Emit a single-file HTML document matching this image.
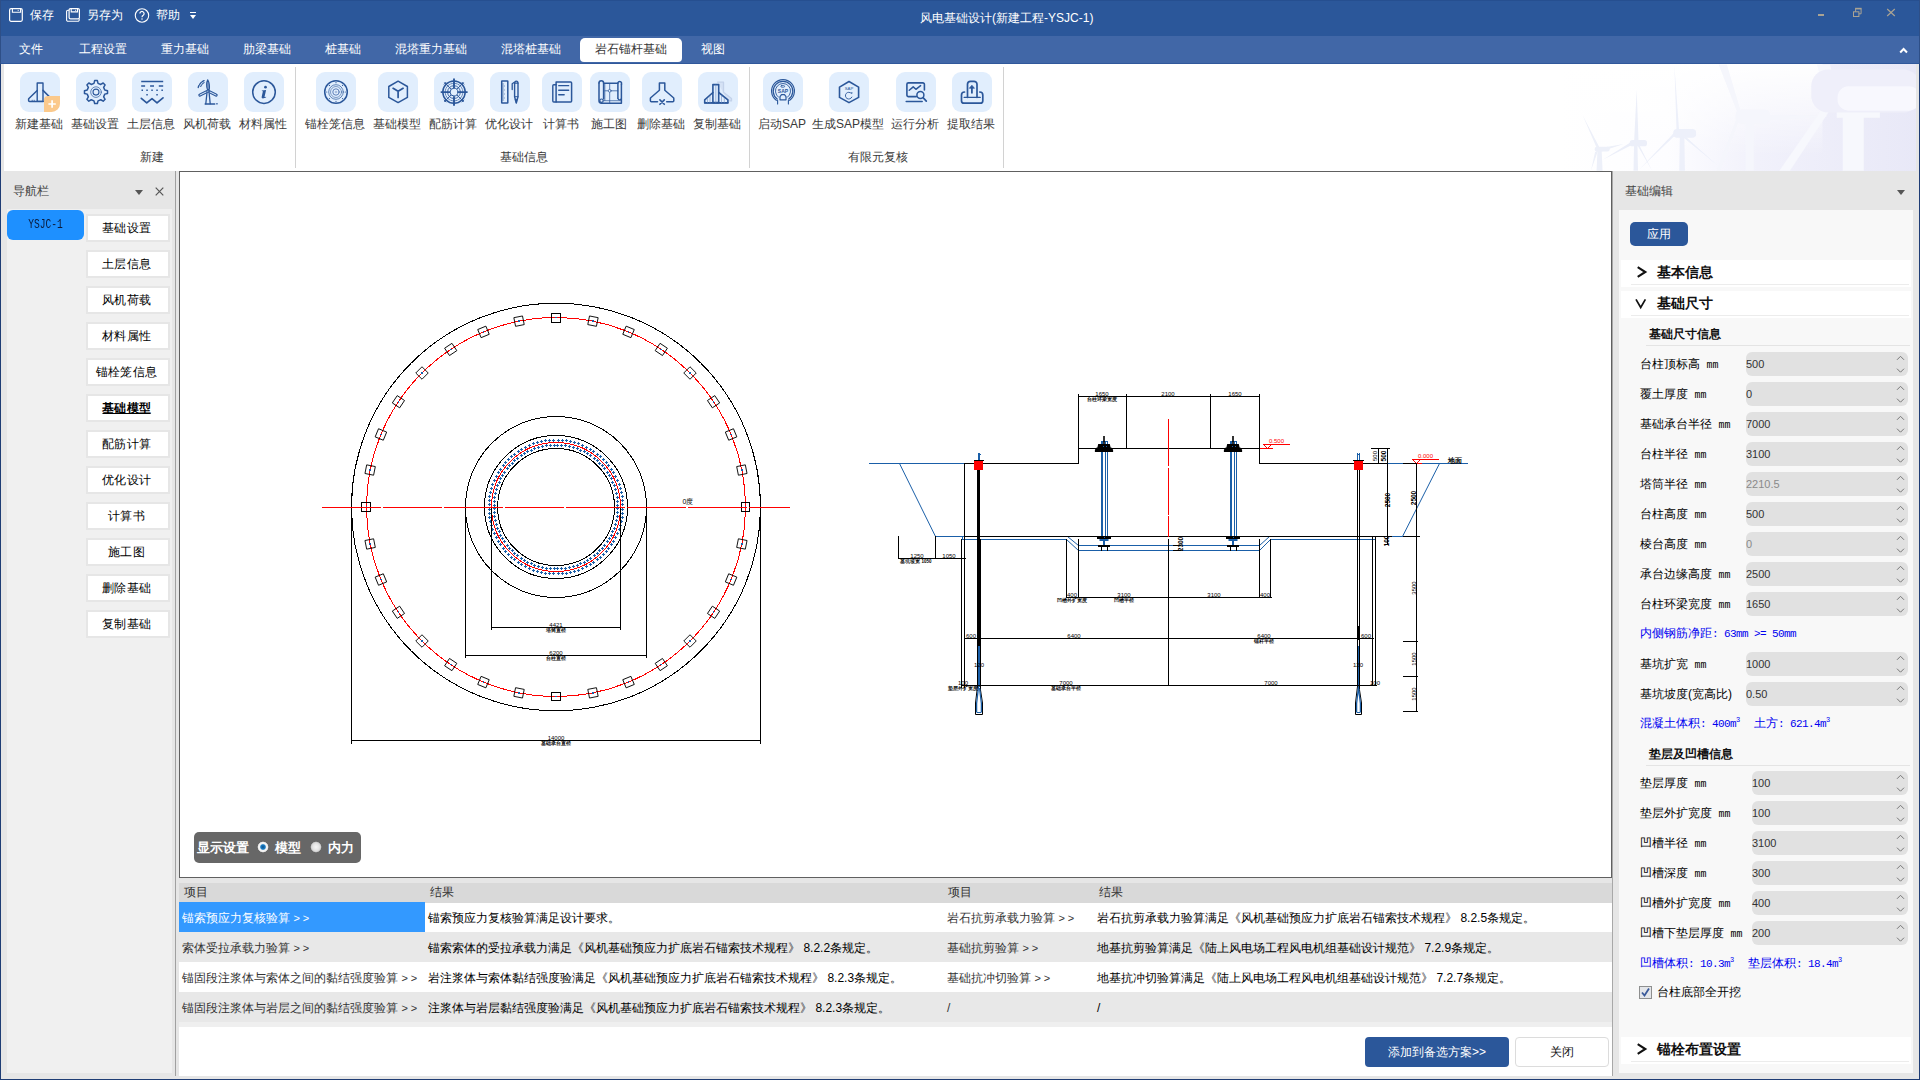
<!DOCTYPE html><html lang="zh"><head><meta charset="utf-8"><title>风电基础设计</title><style>
*{box-sizing:border-box;margin:0;padding:0}
html,body{width:1920px;height:1080px;overflow:hidden;background:#e6e6e6}
body{font-family:"Liberation Sans",sans-serif;font-size:12px;color:#222;position:relative}
.abs{position:absolute}
.t{position:absolute;white-space:nowrap;line-height:1}
#title{left:0;top:0;width:1920px;height:36px;background:#2b579a}
#menu{left:0;top:36px;width:1920px;height:28px;background:#4167a7;border-bottom:1px solid #30589b}
#ribbon{left:4px;top:64px;width:1912px;height:107px;background:#fff;overflow:hidden}
.frameL{left:0;top:0;width:1px;height:1080px;background:linear-gradient(#2e4f87 0,#2e4f87 64px,#1f3d75 64px)}
.frameR{left:1919px;top:0;width:1px;height:1080px;background:linear-gradient(#2e4f87 0,#2e4f87 64px,#1f3d75 64px)}
.frameT{left:0;top:0;width:1920px;height:1px;background:#264f90}
.frameB{left:0;top:1079px;width:1920px;height:1px;background:#1f3d75}
.tile{position:absolute;top:8px;width:40px;height:40px;border-radius:9px;background:#e1eefd}
.tile svg{position:absolute;left:0;top:0;width:40px;height:40px;overflow:visible}
.rl{position:absolute;top:53px;margin-left:-1px;font-size:12px;line-height:14px;color:#3a3a3a;white-space:nowrap;transform:translateX(-50%)}
.gl{position:absolute;top:86px;font-size:12px;line-height:14px;color:#3a3a3a;white-space:nowrap;transform:translateX(-50%)}
.rsep{position:absolute;top:3px;width:1px;height:101px;background:#d2d2d2}
.mi{position:absolute;top:0;height:28px;line-height:27px;font-size:12px;color:#fff;white-space:nowrap;transform:translateX(-50%)}
.navbtn{position:absolute;left:86px;width:84px;height:28px;background:#e6e6e6}
.navbtn i{position:absolute;left:2px;top:2px;right:2px;bottom:2px;background:#fff;display:block}
.navbtn span{position:absolute;left:0;right:3px;top:7px;text-align:center;font-size:12px;line-height:14px;color:#000;font-style:normal}
.row{position:absolute;left:1640px;font-size:12px;line-height:14px;color:#000;white-space:nowrap}
.inp{position:absolute;height:24px;background:#e1e1e1;border-radius:6px;font-size:11px;line-height:24px;color:#333;padding-left:0}
.inp b{font-weight:normal;position:absolute;left:0;top:0}
.inp svg{position:absolute;right:3px;top:2px;width:9px;height:20px}
.blue{position:absolute;left:1640px;font-size:12px;line-height:14px;color:#0000f0;white-space:nowrap}
.sec{position:absolute;left:1621px;width:290px;height:27px;background:#fff}
.sec u{position:absolute;left:10px;right:2px;bottom:2px;height:1px;background:#ececec;display:block}
.sec span{position:absolute;left:36px;top:5px;font-size:14px;line-height:15px;font-weight:bold;color:#111}
.sec em{position:absolute;left:14px;top:5px;font-size:15px;line-height:15px;font-weight:bold;font-style:normal;color:#111}
.sub{position:absolute;left:1649px;font-size:12px;line-height:14px;font-weight:bold;color:#111;white-space:nowrap}
.subl{position:absolute;left:1646px;width:264px;height:1px;background:#e4e4e4}
.th{position:absolute;top:882px;height:20px;font-size:12px;line-height:20px;color:#333}
.td{position:absolute;font-size:12px;line-height:14px;white-space:nowrap;color:#333}
.tdb{color:#000}

.mo{font-family:"Liberation Mono",monospace;font-size:11px;letter-spacing:-.6px;white-space:pre}
.mo sup{font-size:7px;line-height:0;vertical-align:5px;letter-spacing:0;display:inline-block;width:6px}
.sec em.gt{left:15px;top:3px;font-size:18px;line-height:18px;transform:scaleX(.9)}
</style></head><body><div class="abs" id="title"><svg class="abs" style="left:8px;top:7px" width="16" height="16" viewBox="0 0 16 16" fill="none" stroke="#fff" stroke-width="1.2"><rect x="1.6" y="1.700" width="12.700" height="12.600" rx="1.500"/><path d="M4.400 1.700v3.500h8.200v-3.500" stroke-width="1.100"/><path d="M10.200 2.900v1" stroke-width="1"/></svg><div class="t" style="left:30px;top:9px;font-size:12px;color:#fff;width:24.06px;text-align:justify;text-align-last:justify;white-space:nowrap">保存</div><svg class="abs" style="left:65px;top:7px" width="16" height="16" viewBox="0 0 16 16" fill="none" stroke="#fff" stroke-width="1.200"><rect x="4.100" y="1.700" width="10.300" height="10.100" rx="1.400"/><path d="M6.200 1.700v3.200h6.300v-3.200" stroke-width="1.100"/><path d="M10.600 2.800v1" stroke-width="1"/><path d="M4.100 3.300h-1.200a1.300 1.300 0 0 0-1.300 1.300v8.300a1.400 1.400 0 0 0 1.400 1.400h9.800a1.400 1.400 0 0 0 1.400-1.400v-1.100" stroke-width="1.100"/></svg><div class="t" style="left:87px;top:9px;font-size:12px;color:#fff;width:36.06px;text-align:justify;text-align-last:justify;white-space:nowrap">另存为</div><svg class="abs" style="left:134px;top:7px" width="16" height="16" viewBox="0 0 16 16" fill="none" stroke="#fff" stroke-width="1.100"><circle cx="8" cy="8.500" r="6.700"/><path d="M5.900 6.600a2.100 2.100 0 1 1 3.300 1.700c-.8.500-1.200.9-1.200 1.900" stroke-width="1.200"/><path d="M8 12h.01" stroke-width="1.500" stroke-linecap="round"/></svg><div class="t" style="left:156px;top:9px;font-size:12px;color:#fff;width:24.06px;text-align:justify;text-align-last:justify;white-space:nowrap">帮助</div><div class="abs" style="left:190px;top:12px;width:6px;height:1px;background:#fff"></div><div class="abs" style="left:190px;top:15px;width:0;height:0;border-left:3px solid transparent;border-right:3px solid transparent;border-top:4px solid #fff"></div><div class="t" style="left:920px;top:12px;font-size:12px;color:#fff;width:173.4px;text-align:justify;text-align-last:justify;white-space:nowrap">风电基础设计(新建工程-YSJC-1)</div><div class="abs" style="left:1818px;top:14px;width:6px;height:2px;background:#aaa393"></div><svg class="abs" style="left:1852px;top:7px" width="11" height="11" viewBox="0 0 11 11" fill="none" stroke="#aaa393" stroke-width="1"><rect x="1.500" y="4.800" width="5.400" height="4.700"/><path d="M3.600 4.800v-3h5.500v5h-2.200" /><path d="M3.100 1.500h6.500" stroke-width="1.400"/></svg><svg class="abs" style="left:1886px;top:8px" width="10" height="9" viewBox="0 0 10 9" fill="none" stroke="#aaa393" stroke-width="1.200"><path d="M1.200 1l7.600 7M8.800 1l-7.600 7"/></svg></div><div class="abs" id="menu"><div class="abs" style="left:580px;top:2px;width:102px;height:24px;background:#fff;border-radius:5px 5px 4px 4px"></div><div class="mi" style="left:31px;width:24.06px;text-align:justify;text-align-last:justify;white-space:nowrap">文件</div><div class="mi" style="left:103px;width:48.06px;text-align:justify;text-align-last:justify;white-space:nowrap">工程设置</div><div class="mi" style="left:185px;width:48.06px;text-align:justify;text-align-last:justify;white-space:nowrap">重力基础</div><div class="mi" style="left:267px;width:48.06px;text-align:justify;text-align-last:justify;white-space:nowrap">肋梁基础</div><div class="mi" style="left:343px;width:36.06px;text-align:justify;text-align-last:justify;white-space:nowrap">桩基础</div><div class="mi" style="left:431px;width:72.06px;text-align:justify;text-align-last:justify;white-space:nowrap">混塔重力基础</div><div class="mi" style="left:531px;width:60.06px;text-align:justify;text-align-last:justify;white-space:nowrap">混塔桩基础</div><div class="mi" style="left:631px;color:#333;width:72.06px;text-align:justify;text-align-last:justify;white-space:nowrap">岩石锚杆基础</div><div class="mi" style="left:713px;width:24.06px;text-align:justify;text-align-last:justify;white-space:nowrap">视图</div><svg class="abs" style="left:1899px;top:11px" width="9" height="7" viewBox="0 0 9 7" fill="none" stroke="#fff" stroke-width="2"><path d="M1.200 5.500l3.400-3.500 3.400 3.500"/></svg></div><div class="abs" id="ribbon"><svg class="abs" style="left:1556px;top:-4px" width="360" height="120" viewBox="0 0 1920 640">
<defs><linearGradient id="wg" x1="0" y1="0" x2="1" y2="0"><stop offset="0" stop-color="#fff"/><stop offset=".3" stop-color="#fdfdff"/><stop offset=".55" stop-color="#f1f1fb"/><stop offset="1" stop-color="#e8e8f7"/></linearGradient>
<linearGradient id="wg2" x1="0" y1="0" x2="0" y2="1"><stop offset="0" stop-color="#fff" stop-opacity="1"/><stop offset=".4" stop-color="#fff" stop-opacity=".55"/><stop offset=".8" stop-color="#fff" stop-opacity="0"/></linearGradient>
<filter id="bl" x="-5%" y="-5%" width="110%" height="110%"><feGaussianBlur stdDeviation="3"/></filter></defs>
<rect width="1920" height="640" fill="url(#wg)"/><rect width="1400" height="640" fill="url(#wg2)"/>
<g filter="url(#bl)">
<g fill="#edf0f9"><path d="M195 590l5-110h22l5 110z"/><path d="M200 478l-80-185 92 176zM208 470l132-22-128 42zM203 482l-38 108 22-100z"/><rect x="185" y="462" width="80" height="26" rx="12"/></g>
<g fill="#eceff9"><path d="M392 590l3-145h18l3 145z"/><path d="M395 440l14-282 10 282zM396 446l-168 86 160-100zM408 446l84 146-70-140z"/><rect x="372" y="426" width="92" height="34" rx="14"/></g>
<g fill="#edf0fa"><path d="M636 590l3-190h24l3 190z"/><path d="M622 392l-12-364 26 360zM620 396l-200 190 190-200zM640 398l202 166-196-178z"/><rect x="604" y="368" width="122" height="46" rx="20"/></g>
<g fill="#f5f6fc"><path d="M990 590v-280h44v280z"/><path d="M950 290l-104-266h44l78 262zM960 292l462 2-2 10-460 28zM946 300l-112 290h22l104-282z"/><rect x="936" y="264" width="186" height="76" rx="30"/></g>
<g fill="#f7f8fd"><path d="M1508 590v-300h112v300z"/><path d="M1420 230l-250 360h56l224-340z"/><path d="M1370 24l30 110 60-20-20-90z"/><path d="M1476 250h230v58h-230z"/><rect x="1340" y="50" width="580" height="230" rx="90" fill="#efeffa"/><rect x="1480" y="140" width="440" height="130" rx="60" fill="#f8f8fe"/></g>
</g></svg><div class="tile" style="left:16px"><svg viewBox="0 0 40 40" fill="none" stroke="#2b579a" stroke-width="1.5" stroke-linecap="round" stroke-linejoin="round"><path d="M17.2 11h5.800v18.400h-5.800z" stroke-width="1.400"/><path d="M17.200 18.500l-8.300 8a1 1 0 0 0-.3.700v1.200a1 1 0 0 0 1 1h13.600" stroke-width="1.500"/><path d="M23 18.400l7 7" stroke-width="1.500"/><path d="M12.200 29v-.8M14.200 29v-.8" stroke-width=".8"/>
<path d="M28 24h12v7.500a8.500 8.500 0 0 1-8.500 8.500h-7.500v-12a4 4 0 0 1 4-4z" fill="#fbc98b" stroke="none"/><path d="M28.400 32h7.400M32.100 28.300v7.400" stroke="#fff" stroke-width="1.700" stroke-linecap="butt"/></svg></div><div class="rl" style="left:36px;width:48.06px;text-align:justify;text-align-last:justify;white-space:nowrap">新建基础</div><div class="tile" style="left:72px"><svg viewBox="0 0 40 40" fill="none" stroke="#2b579a" stroke-width="1.5" stroke-linecap="round" stroke-linejoin="round"><path d="M18.64 8.58 L21.36 8.58 L22.03 11.33 L24.76 12.46 L27.18 10.99 L29.11 12.92 L27.64 15.34 L28.77 18.07 L31.52 18.74 L31.52 21.46 L28.77 22.13 L27.64 24.86 L29.11 27.28 L27.18 29.21 L24.76 27.74 L22.03 28.87 L21.36 31.62 L18.64 31.62 L17.97 28.87 L15.24 27.74 L12.82 29.21 L10.89 27.28 L12.36 24.86 L11.23 22.13 L8.48 21.46 L8.48 18.74 L11.23 18.07 L12.36 15.34 L10.89 12.92 L12.82 10.99 L15.24 12.46 L17.97 11.33Z" stroke-width="1.500"/><circle cx="20" cy="20.100" r="5.300" stroke-width=".7"/><circle cx="20" cy="20.100" r="3" stroke-width="1.100"/></svg></div><div class="rl" style="left:92px;width:48.06px;text-align:justify;text-align-last:justify;white-space:nowrap">基础设置</div><div class="tile" style="left:128px"><svg viewBox="0 0 40 40" fill="none" stroke="#2b579a" stroke-width="1.5" stroke-linecap="round" stroke-linejoin="round"><path d="M9.200 9.500h22" stroke-width="1.500" stroke-linecap="butt"/><path d="M9.200 14h3.900M18.100 14h3.900M26.800 14h4.400" stroke-width="1.400" stroke-linecap="butt"/>
<path d="M9.500 17.500h1.500v1.500h-1.500zM14.300 17.500h1.500v1.500h-1.500zM19.300 17.500h1.500v1.500h-1.500zM24.300 17.500h1.500v1.500h-1.500zM29.400 17.500h1.500v1.500h-1.500zM14.300 22h1.500v1.500h-1.500zM24.300 22h1.500v1.500h-1.500z" fill="#2b579a" stroke="none"/>
<path d="M9.300 26.300l5.450 4.600 5.250-4.200 5 4.200 6-5" stroke-width="1.700"/></svg></div><div class="rl" style="left:148px;width:48.06px;text-align:justify;text-align-last:justify;white-space:nowrap">土层信息</div><div class="tile" style="left:184px"><svg viewBox="0 0 40 40" fill="none" stroke="#2b579a" stroke-width="1.5" stroke-linecap="round" stroke-linejoin="round"><path d="M18.900 21.500l-1.100 10.200M21.200 21.500l1 10.200" stroke-width="1.300"/><path d="M17.200 31.900h9.500" stroke-width="1.500"/><path d="M28.300 31.100h1.300v1.300h-1.300z" fill="#2b579a" stroke="none"/>
<path d="M19.400 17.500c-1-3-1-7 .3-9.700 1.500 2.500 2 6.500 1.600 9.700z" stroke-width="1.100" fill="#7b98c6"/>
<path d="M18.800 19.600l-7 3.500" stroke-width="3" /><path d="M18.300 19.900l-6.300 3.100" stroke-width="1" stroke="#e1eefd"/>
<path d="M21.200 19.600l7 3.500" stroke-width="3"/><path d="M21.700 19.900l6.300 3.100" stroke-width="1" stroke="#e1eefd"/>
<circle cx="20" cy="19.300" r="1.100" fill="#e1eefd" stroke-width=".9"/>
<path d="M10.200 15.500c.8-3 3.200-5.800 6-7" stroke-width="1.300" stroke-dasharray="2.300 1.200"/><path d="M12.700 14.500c.8-1.800 2.200-3.300 4-4.200" stroke-width="1.100" stroke-dasharray="2 1.200"/></svg></div><div class="rl" style="left:204px;width:48.06px;text-align:justify;text-align-last:justify;white-space:nowrap">风机荷载</div><div class="tile" style="left:240px"><svg viewBox="0 0 40 40" fill="none" stroke="#2b579a" stroke-width="1.5" stroke-linecap="round" stroke-linejoin="round"><circle cx="20" cy="20.100" r="11.300" stroke-width="1.500"/><circle cx="21.500" cy="15.200" r="1.350" fill="#2b579a" stroke="none"/><path d="M17.900 18.600l4.200-.7-1.500 6.600c-.1.500.1.700.5.600l1-.4.100.6c-1.200.8-2.300 1.100-3.200 1.100-1.100 0-1.500-.7-1.300-1.700l1.100-4.900c.1-.500-.1-.7-.5-.7h-.5z" fill="#2b579a" stroke="none"/></svg></div><div class="rl" style="left:260px;width:48.06px;text-align:justify;text-align-last:justify;white-space:nowrap">材料属性</div><div class="tile" style="left:312px"><svg viewBox="0 0 40 40" fill="none" stroke="#2b579a" stroke-width="1.5" stroke-linecap="round" stroke-linejoin="round"><circle cx="20" cy="20" r="11.300" stroke-width="1.500"/><circle cx="20" cy="20" r="7.300" stroke-width=".7"/><circle cx="20" cy="20" r="5.500" stroke-width=".55"/><circle cx="20" cy="20" r="3.200" stroke-width="1" stroke="#5d7fb8"/><circle cx="20" cy="20" r="1.300" fill="#a9bddd" stroke="none"/><circle cx="20.00" cy="10.70" r=".6" fill="#2b579a" stroke="none"/><circle cx="26.58" cy="13.42" r=".6" fill="#2b579a" stroke="none"/><circle cx="29.30" cy="20.00" r=".6" fill="#2b579a" stroke="none"/><circle cx="26.58" cy="26.58" r=".6" fill="#2b579a" stroke="none"/><circle cx="20.00" cy="29.30" r=".6" fill="#2b579a" stroke="none"/><circle cx="13.42" cy="26.58" r=".6" fill="#2b579a" stroke="none"/><circle cx="10.70" cy="20.00" r=".6" fill="#2b579a" stroke="none"/><circle cx="13.42" cy="13.42" r=".6" fill="#2b579a" stroke="none"/></svg></div><div class="rl" style="left:332px;width:60.06px;text-align:justify;text-align-last:justify;white-space:nowrap">锚栓笼信息</div><div class="tile" style="left:374px"><svg viewBox="0 0 40 40" fill="none" stroke="#2b579a" stroke-width="1.5" stroke-linecap="round" stroke-linejoin="round"><path d="M20.100 9.200l9.300 5.300v10.900l-9.300 5.200-9.300-5.200v-10.900z" stroke-width="1.500"/><path d="M20.100 25.500v-6.200l-5-3M20.100 19.300l5-3" stroke-width="1.700"/></svg></div><div class="rl" style="left:394px;width:48.06px;text-align:justify;text-align-last:justify;white-space:nowrap">基础模型</div><div class="tile" style="left:430px"><svg viewBox="0 0 40 40" fill="none" stroke="#2b579a" stroke-width="1.5" stroke-linecap="round" stroke-linejoin="round"><circle cx="20" cy="20.100" r="11.200" stroke-width="1.500"/><circle cx="20" cy="20.100" r="8.800" stroke-width=".7" stroke-dasharray="2.500 1"/><circle cx="20" cy="20.100" r="6.400" stroke-width=".9"/><path d="M22.97 17.13L29.40 10.70" stroke-width="1"/><path d="M27.99 10.27L29.83 12.11" stroke-width="1"/><path d="M22.97 23.07L29.40 29.50" stroke-width="1"/><path d="M29.83 28.09L27.99 29.93" stroke-width="1"/><path d="M17.03 23.07L10.60 29.50" stroke-width="1"/><path d="M12.01 29.93L10.17 28.09" stroke-width="1"/><path d="M17.03 17.13L10.60 10.70" stroke-width="1"/><path d="M10.17 12.11L12.01 10.27" stroke-width="1"/><circle cx="20" cy="20.100" r="3.900" fill="#e1eefd" stroke-width="1"/><path d="M20 6.500v9.400M20 24.300v9.400M6.700 20.100h9.400M24.100 20.100h9.500" stroke-width="1.900" stroke-linecap="butt"/></svg></div><div class="rl" style="left:450px;width:48.06px;text-align:justify;text-align-last:justify;white-space:nowrap">配筋计算</div><div class="tile" style="left:486px"><svg viewBox="0 0 40 40" fill="none" stroke="#2b579a" stroke-width="1.5" stroke-linecap="round" stroke-linejoin="round"><rect x="11.700" y="8.900" width="6.100" height="22.100" stroke-width="1.500" rx=".3"/><path d="M12.500 12h1.200M12.500 14h2M12.500 16h1.200M12.500 18h2M12.500 20h1.200M12.500 22h2M12.500 24h1.200M12.500 26h2M12.500 28h1.200" stroke-width=".6"/>
<path d="M24.600 24.700v-13.200a1.700 2.400 0 0 1 3.400 0v13.200l-1.700 6.300z" stroke-width="1.400"/><path d="M24.600 11.200h3.400" stroke-width="1.200"/><path d="M24.600 24.700h3.400" stroke-width="1"/><path d="M25.300 27.300h2l-1 3.400z" fill="#2b579a" stroke-width=".5"/><path d="M24 10.500l-1.800 1.200v5.800" stroke-width="1.300"/></svg></div><div class="rl" style="left:506px;width:48.06px;text-align:justify;text-align-last:justify;white-space:nowrap">优化设计</div><div class="tile" style="left:538px"><svg viewBox="0 0 40 40" fill="none" stroke="#2b579a" stroke-width="1.5" stroke-linecap="round" stroke-linejoin="round"><path d="M14.100 10h14.500a1 1 0 0 1 1 1v18a1 1 0 0 1-1 1h-14.500z" stroke-width="1.500"/><path d="M14.100 12.700h-2.300a1 1 0 0 0-1 1v15.300a1 1 0 0 0 1 1h2.300" stroke-width="1.400"/><path d="M16.700 13.700h10M16.700 18.250h10M16.700 22.750h5.500" stroke-width="1.300"/></svg></div><div class="rl" style="left:558px;width:36.06px;text-align:justify;text-align-last:justify;white-space:nowrap">计算书</div><div class="tile" style="left:586px"><svg viewBox="0 0 40 40" fill="none" stroke="#2b579a" stroke-width="1.5" stroke-linecap="round" stroke-linejoin="round"><path d="M9 11a2.300 2.300 0 0 1 4.600 0v15.800" stroke-width="1.500"/><path d="M9 11v17.800a2.400 2.400 0 0 0 2.400 2.400h20v-19" stroke-width="1.500"/><path d="M13.600 11.300h14.300" stroke-width="1.400"/><path d="M27.900 26.300v-15.500a1.900 1.900 0 0 1 3.600 0v1.500" stroke-width="1.500"/><path d="M27.900 26.300a1.800 1.800 0 0 0 3.500 .2" stroke-width="1.200"/>
<circle cx="11.500" cy="28.700" r="1.700" stroke-width="1.200"/><path d="M13.600 28.700h17.500" stroke-width=".7"/>
<path d="M19.700 11.500v19.500M14.800 11.500v17M14.800 18.800h13" stroke-width=".75"/><circle cx="19.700" cy="18.800" r="1.400" stroke-width=".7" fill="#e1eefd"/></svg></div><div class="rl" style="left:606px;width:36.06px;text-align:justify;text-align-last:justify;white-space:nowrap">施工图</div><div class="tile" style="left:638px"><svg viewBox="0 0 40 40" fill="none" stroke="#2b579a" stroke-width="1.5" stroke-linecap="round" stroke-linejoin="round"><path d="M15.500 29.700h-6.100a1 1 0 0 1-1-1v-2.300a1 1 0 0 1 .3-.7l8.700-7.500v-7.200h5.400v7.200l8.700 7.500a1 1 0 0 1 .3 .7v2.300a1 1 0 0 1-1 1h-6.100" stroke-width="1.500"/><path d="M17.900 27.900l4.400 4.400M22.300 27.900l-4.400 4.400" stroke-width="1.600"/></svg></div><div class="rl" style="left:658px;width:48.06px;text-align:justify;text-align-last:justify;white-space:nowrap">删除基础</div><div class="tile" style="left:694px"><svg viewBox="0 0 40 40" fill="none" stroke="#2b579a" stroke-width="1.5" stroke-linecap="round" stroke-linejoin="round"><path d="M19.500 10.200h6v10l8 6.200v2.500h-3.500" stroke="#c3d2ea" stroke-width="1.300" fill="#d5e2f5"/><path d="M14.900 12.600h5.800v18h-5.800z" stroke-width="1.600"/><path d="M14.900 20.500l-8.200 7.300v3h23.200v-3l-9.200-7.300" stroke-width="1.600"/><path d="M6.700 30.900h23.200" stroke-width="1.600"/>
<path d="M9.500 26.500v4M12 24.300v6.200M23.500 24v6.500M26.300 26.300v4.200M17.800 13v17.500" stroke-width=".6" stroke="#6f8fc2"/></svg></div><div class="rl" style="left:714px;width:48.06px;text-align:justify;text-align-last:justify;white-space:nowrap">复制基础</div><div class="tile" style="left:759px"><svg viewBox="0 0 40 40" fill="none" stroke="#2b579a" stroke-width="1.5" stroke-linecap="round" stroke-linejoin="round"><path d="M13.30 28.32A11.4 11.4 0 1 1 26.70 28.32" stroke-width="1.2"/><path d="M14.24 27.03A9.8 9.8 0 1 1 25.76 27.03" stroke-width="1.2"/><path d="M15.53 25.25A7.6 7.6 0 1 1 24.47 25.25" stroke-width="0.9"/><path d="M14.600 28.300v3.700M25.400 28.300v3.700" stroke-width="1.100"/><path d="M17 27.800v-3.200l1.500-1.900h3l1.500 1.900v3.200z" fill="#e1eefd" stroke-width="1.200"/><rect x="17.900" y="13.600" width="3.700" height="1.600" rx=".8" stroke-width=".8"/><text x="20" y="21" font-family="Liberation Sans, sans-serif" font-size="5" font-weight="bold" fill="#2b579a" stroke="none" text-anchor="middle">SAP</text></svg></div><div class="rl" style="left:779px;width:48.08px;text-align:justify;text-align-last:justify;white-space:nowrap">启动SAP</div><div class="tile" style="left:825px"><svg viewBox="0 0 40 40" fill="none" stroke="#2b579a" stroke-width="1.5" stroke-linecap="round" stroke-linejoin="round"><path d="M20 9.500l9.600 5.600v10.300l-9.600 5.200-9.500-5.200v-10.300z" stroke-width="1.600"/><path d="M22.300 21.300a3.400 3.400 0 1 0 .6 3.800" stroke-width=".9"/><path d="M22.200 20.300h1.200v1.200h-1.200z" fill="#2b579a" stroke="none"/>
<text x="20" y="17.800" font-family="Liberation Sans, sans-serif" font-size="4.300" fill="#2b579a" stroke="none" text-anchor="middle">SAP</text></svg></div><div class="rl" style="left:845px;width:72.08px;text-align:justify;text-align-last:justify;white-space:nowrap">生成SAP模型</div><div class="tile" style="left:892px"><svg viewBox="0 0 40 40" fill="none" stroke="#2b579a" stroke-width="1.5" stroke-linecap="round" stroke-linejoin="round"><path d="M28.400 18v-5.650a1.500 1.500 0 0 0-1.500-1.500h-14.500a1.500 1.500 0 0 0-1.500 1.500v10.750a1.500 1.500 0 0 0 1.500 1.500h8" stroke-width="1.600"/><path d="M10.200 29.500h16" stroke-width="1.500"/><path d="M13.250 18.300l3.950-3.400 2.700 2.400 4.700-3.700" stroke-width="1.500"/><circle cx="24.400" cy="23.050" r="3.500" stroke-width="1.500" fill="#e1eefd"/><path d="M27.300 25.900l3 3.200" stroke-width="1.700"/></svg></div><div class="rl" style="left:912px;width:48.06px;text-align:justify;text-align-last:justify;white-space:nowrap">运行分析</div><div class="tile" style="left:948px"><svg viewBox="0 0 40 40" fill="none" stroke="#2b579a" stroke-width="1.5" stroke-linecap="round" stroke-linejoin="round"><path d="M15.500 25.300v-13a3 3 0 0 1 3-3h3.500a3 3 0 0 1 3 3v13" stroke-width="1.700"/><path d="M12.500 20a3 3 0 0 0-3 3v5.700a2.500 2.500 0 0 0 2.500 2.500h16.300a2.500 2.500 0 0 0 2.500-2.500v-5.700a3 3 0 0 0-3-3" stroke-width="1.700"/><path d="M12.200 25.400h16" stroke-width="1.400"/><path d="M19.900 21.400v-6" stroke-width="1.800" stroke-linecap="butt"/><path d="M17.600 16l2.300-2.700 2.300 2.700z" fill="#2b579a" stroke-width=".8"/></svg></div><div class="rl" style="left:968px;width:48.06px;text-align:justify;text-align-last:justify;white-space:nowrap">提取结果</div><div class="gl" style="left:148px;width:24.06px;text-align:justify;text-align-last:justify;white-space:nowrap">新建</div><div class="gl" style="left:520px;width:48.06px;text-align:justify;text-align-last:justify;white-space:nowrap">基础信息</div><div class="gl" style="left:874px;width:60.06px;text-align:justify;text-align-last:justify;white-space:nowrap">有限元复核</div><div class="rsep" style="left:291px"></div><div class="rsep" style="left:745px"></div><div class="rsep" style="left:999px"></div></div><div class="abs frameT"></div><div class="abs frameL"></div><div class="abs frameR"></div><div class="abs frameB"></div><div class="abs" style="left:7px;top:209px;width:165px;height:864px;background:#f0f0f0"></div><div class="t" style="left:13px;top:185px;font-size:12px;color:#444;width:36.06px;text-align:justify;text-align-last:justify;white-space:nowrap">导航栏</div><div class="abs" style="left:135px;top:190px;width:0;height:0;border-left:4.500px solid transparent;border-right:4.500px solid transparent;border-top:5px solid #555"></div><svg class="abs" style="left:155px;top:187px" width="9" height="9" viewBox="0 0 9 9" fill="none" stroke="#555" stroke-width="1.200"><path d="M.7 .7l7.600 7.600M8.300 .7l-7.600 7.600"/></svg><div class="abs" style="left:7px;top:210px;width:77px;height:30px;background:#1e90ff;border-radius:6px"></div><div class="t" style="left:7px;top:218px;width:77px;text-align:center;font-family:'Liberation Mono',monospace;font-size:13px;color:#0a1a3a;transform:scaleX(.74)">YSJC-1</div><div class="navbtn" style="top:214px"><i></i><span class="nb" style="left:16.47px;right:auto;width:48.06px;text-align:justify;text-align-last:justify;white-space:nowrap">基础设置</span></div><div class="navbtn" style="top:250px"><i></i><span class="nb" style="left:16.47px;right:auto;width:48.06px;text-align:justify;text-align-last:justify;white-space:nowrap">土层信息</span></div><div class="navbtn" style="top:286px"><i></i><span class="nb" style="left:16.47px;right:auto;width:48.06px;text-align:justify;text-align-last:justify;white-space:nowrap">风机荷载</span></div><div class="navbtn" style="top:322px"><i></i><span class="nb" style="left:16.47px;right:auto;width:48.06px;text-align:justify;text-align-last:justify;white-space:nowrap">材料属性</span></div><div class="navbtn" style="top:358px"><i></i><span class="nb" style="left:10.47px;right:auto;width:60.06px;text-align:justify;text-align-last:justify;white-space:nowrap">锚栓笼信息</span></div><div class="navbtn" style="top:394px"><i></i><span class="nb" style="font-weight:bold;text-decoration:underline;left:16.47px;right:auto;width:48.06px;text-align:justify;text-align-last:justify;white-space:nowrap">基础模型</span></div><div class="navbtn" style="top:430px"><i></i><span class="nb" style="left:16.47px;right:auto;width:48.06px;text-align:justify;text-align-last:justify;white-space:nowrap">配筋计算</span></div><div class="navbtn" style="top:466px"><i></i><span class="nb" style="left:16.47px;right:auto;width:48.06px;text-align:justify;text-align-last:justify;white-space:nowrap">优化设计</span></div><div class="navbtn" style="top:502px"><i></i><span class="nb" style="left:22.47px;right:auto;width:36.06px;text-align:justify;text-align-last:justify;white-space:nowrap">计算书</span></div><div class="navbtn" style="top:538px"><i></i><span class="nb" style="left:22.47px;right:auto;width:36.06px;text-align:justify;text-align-last:justify;white-space:nowrap">施工图</span></div><div class="navbtn" style="top:574px"><i></i><span class="nb" style="left:16.47px;right:auto;width:48.06px;text-align:justify;text-align-last:justify;white-space:nowrap">删除基础</span></div><div class="navbtn" style="top:610px"><i></i><span class="nb" style="left:16.47px;right:auto;width:48.06px;text-align:justify;text-align-last:justify;white-space:nowrap">复制基础</span></div><div class="abs" style="left:175px;top:171px;width:1px;height:905px;background:#a0a0a0"></div><div class="abs" style="left:179px;top:171px;width:1433px;height:707px;background:#fff;border:1px solid #606060"></div><svg class="abs" style="left:0;top:0" width="1920" height="1080" viewBox="0 0 1920 1080" fill="none" shape-rendering="crispEdges" font-family="Liberation Sans, sans-serif"><ellipse cx="556.0" cy="507.0" rx="204.5" ry="203.800" stroke="#000" stroke-width="1"/><circle cx="556.0" cy="507.0" r="189.5" stroke="#ff0000" stroke-width="1" /><circle cx="556.0" cy="507.0" r="90.5" stroke="#000" stroke-width="1" /><circle cx="556.0" cy="507.0" r="71.5" stroke="#000" stroke-width="1" /><circle cx="556.0" cy="507.0" r="58.5" stroke="#000" stroke-width="1" /><circle cx="556.0" cy="507.0" r="64.5" stroke="#ff0000" stroke-width="1" /><path d="M558 439h1v1h1v1h-1v1h-1v-1h-1v-1h1zM562 439h1v1h1v1h-1v1h-1v-1h-1v-1h1zM566 439h1v1h1v1h-1v1h-1v-1h-1v-1h1zM570 440h1v1h1v1h-1v1h-1v-1h-1v-1h1zM574 441h1v1h1v1h-1v1h-1v-1h-1v-1h1zM578 442h1v1h1v1h-1v1h-1v-1h-1v-1h1zM582 444h1v1h1v1h-1v1h-1v-1h-1v-1h1zM586 446h1v1h1v1h-1v1h-1v-1h-1v-1h1zM590 448h1v1h1v1h-1v1h-1v-1h-1v-1h1zM593 450h1v1h1v1h-1v1h-1v-1h-1v-1h1zM597 453h1v1h1v1h-1v1h-1v-1h-1v-1h1zM600 455h1v1h1v1h-1v1h-1v-1h-1v-1h1zM603 458h1v1h1v1h-1v1h-1v-1h-1v-1h1zM606 461h1v1h1v1h-1v1h-1v-1h-1v-1h1zM608 464h1v1h1v1h-1v1h-1v-1h-1v-1h1zM611 468h1v1h1v1h-1v1h-1v-1h-1v-1h1zM613 471h1v1h1v1h-1v1h-1v-1h-1v-1h1zM615 475h1v1h1v1h-1v1h-1v-1h-1v-1h1zM617 479h1v1h1v1h-1v1h-1v-1h-1v-1h1zM619 483h1v1h1v1h-1v1h-1v-1h-1v-1h1zM620 487h1v1h1v1h-1v1h-1v-1h-1v-1h1zM621 491h1v1h1v1h-1v1h-1v-1h-1v-1h1zM622 495h1v1h1v1h-1v1h-1v-1h-1v-1h1zM622 499h1v1h1v1h-1v1h-1v-1h-1v-1h1zM622 503h1v1h1v1h-1v1h-1v-1h-1v-1h1zM622 508h1v1h1v1h-1v1h-1v-1h-1v-1h1zM622 512h1v1h1v1h-1v1h-1v-1h-1v-1h1zM622 516h1v1h1v1h-1v1h-1v-1h-1v-1h1zM621 520h1v1h1v1h-1v1h-1v-1h-1v-1h1zM620 524h1v1h1v1h-1v1h-1v-1h-1v-1h1zM619 528h1v1h1v1h-1v1h-1v-1h-1v-1h1zM617 532h1v1h1v1h-1v1h-1v-1h-1v-1h1zM615 536h1v1h1v1h-1v1h-1v-1h-1v-1h1zM613 540h1v1h1v1h-1v1h-1v-1h-1v-1h1zM611 543h1v1h1v1h-1v1h-1v-1h-1v-1h1zM608 547h1v1h1v1h-1v1h-1v-1h-1v-1h1zM606 550h1v1h1v1h-1v1h-1v-1h-1v-1h1zM603 553h1v1h1v1h-1v1h-1v-1h-1v-1h1zM600 556h1v1h1v1h-1v1h-1v-1h-1v-1h1zM597 558h1v1h1v1h-1v1h-1v-1h-1v-1h1zM593 561h1v1h1v1h-1v1h-1v-1h-1v-1h1zM590 563h1v1h1v1h-1v1h-1v-1h-1v-1h1zM586 565h1v1h1v1h-1v1h-1v-1h-1v-1h1zM582 567h1v1h1v1h-1v1h-1v-1h-1v-1h1zM578 569h1v1h1v1h-1v1h-1v-1h-1v-1h1zM574 570h1v1h1v1h-1v1h-1v-1h-1v-1h1zM570 571h1v1h1v1h-1v1h-1v-1h-1v-1h1zM566 572h1v1h1v1h-1v1h-1v-1h-1v-1h1zM562 572h1v1h1v1h-1v1h-1v-1h-1v-1h1zM558 572h1v1h1v1h-1v1h-1v-1h-1v-1h1zM553 572h1v1h1v1h-1v1h-1v-1h-1v-1h1zM549 572h1v1h1v1h-1v1h-1v-1h-1v-1h1zM545 572h1v1h1v1h-1v1h-1v-1h-1v-1h1zM541 571h1v1h1v1h-1v1h-1v-1h-1v-1h1zM537 570h1v1h1v1h-1v1h-1v-1h-1v-1h1zM533 569h1v1h1v1h-1v1h-1v-1h-1v-1h1zM529 567h1v1h1v1h-1v1h-1v-1h-1v-1h1zM525 565h1v1h1v1h-1v1h-1v-1h-1v-1h1zM521 563h1v1h1v1h-1v1h-1v-1h-1v-1h1zM518 561h1v1h1v1h-1v1h-1v-1h-1v-1h1zM514 558h1v1h1v1h-1v1h-1v-1h-1v-1h1zM511 556h1v1h1v1h-1v1h-1v-1h-1v-1h1zM508 553h1v1h1v1h-1v1h-1v-1h-1v-1h1zM505 550h1v1h1v1h-1v1h-1v-1h-1v-1h1zM503 547h1v1h1v1h-1v1h-1v-1h-1v-1h1zM500 543h1v1h1v1h-1v1h-1v-1h-1v-1h1zM498 540h1v1h1v1h-1v1h-1v-1h-1v-1h1zM496 536h1v1h1v1h-1v1h-1v-1h-1v-1h1zM494 532h1v1h1v1h-1v1h-1v-1h-1v-1h1zM492 528h1v1h1v1h-1v1h-1v-1h-1v-1h1zM491 524h1v1h1v1h-1v1h-1v-1h-1v-1h1zM490 520h1v1h1v1h-1v1h-1v-1h-1v-1h1zM489 516h1v1h1v1h-1v1h-1v-1h-1v-1h1zM489 512h1v1h1v1h-1v1h-1v-1h-1v-1h1zM489 508h1v1h1v1h-1v1h-1v-1h-1v-1h1zM489 503h1v1h1v1h-1v1h-1v-1h-1v-1h1zM489 499h1v1h1v1h-1v1h-1v-1h-1v-1h1zM489 495h1v1h1v1h-1v1h-1v-1h-1v-1h1zM490 491h1v1h1v1h-1v1h-1v-1h-1v-1h1zM491 487h1v1h1v1h-1v1h-1v-1h-1v-1h1zM492 483h1v1h1v1h-1v1h-1v-1h-1v-1h1zM494 479h1v1h1v1h-1v1h-1v-1h-1v-1h1zM496 475h1v1h1v1h-1v1h-1v-1h-1v-1h1zM498 471h1v1h1v1h-1v1h-1v-1h-1v-1h1zM500 468h1v1h1v1h-1v1h-1v-1h-1v-1h1zM503 464h1v1h1v1h-1v1h-1v-1h-1v-1h1zM505 461h1v1h1v1h-1v1h-1v-1h-1v-1h1zM508 458h1v1h1v1h-1v1h-1v-1h-1v-1h1zM511 455h1v1h1v1h-1v1h-1v-1h-1v-1h1zM514 453h1v1h1v1h-1v1h-1v-1h-1v-1h1zM518 450h1v1h1v1h-1v1h-1v-1h-1v-1h1zM521 448h1v1h1v1h-1v1h-1v-1h-1v-1h1zM525 446h1v1h1v1h-1v1h-1v-1h-1v-1h1zM529 444h1v1h1v1h-1v1h-1v-1h-1v-1h1zM533 442h1v1h1v1h-1v1h-1v-1h-1v-1h1zM537 441h1v1h1v1h-1v1h-1v-1h-1v-1h1zM541 440h1v1h1v1h-1v1h-1v-1h-1v-1h1zM545 439h1v1h1v1h-1v1h-1v-1h-1v-1h1zM549 439h1v1h1v1h-1v1h-1v-1h-1v-1h1zM553 439h1v1h1v1h-1v1h-1v-1h-1v-1h1zM557 444h1v1h1v1h-1v1h-1v-1h-1v-1h1zM561 444h1v1h1v1h-1v1h-1v-1h-1v-1h1zM565 444h1v1h1v1h-1v1h-1v-1h-1v-1h1zM569 445h1v1h1v1h-1v1h-1v-1h-1v-1h1zM573 446h1v1h1v1h-1v1h-1v-1h-1v-1h1zM577 447h1v1h1v1h-1v1h-1v-1h-1v-1h1zM580 449h1v1h1v1h-1v1h-1v-1h-1v-1h1zM584 450h1v1h1v1h-1v1h-1v-1h-1v-1h1zM587 452h1v1h1v1h-1v1h-1v-1h-1v-1h1zM590 454h1v1h1v1h-1v1h-1v-1h-1v-1h1zM594 457h1v1h1v1h-1v1h-1v-1h-1v-1h1zM597 459h1v1h1v1h-1v1h-1v-1h-1v-1h1zM599 462h1v1h1v1h-1v1h-1v-1h-1v-1h1zM602 464h1v1h1v1h-1v1h-1v-1h-1v-1h1zM604 467h1v1h1v1h-1v1h-1v-1h-1v-1h1zM607 471h1v1h1v1h-1v1h-1v-1h-1v-1h1zM609 474h1v1h1v1h-1v1h-1v-1h-1v-1h1zM611 477h1v1h1v1h-1v1h-1v-1h-1v-1h1zM612 481h1v1h1v1h-1v1h-1v-1h-1v-1h1zM614 484h1v1h1v1h-1v1h-1v-1h-1v-1h1zM615 488h1v1h1v1h-1v1h-1v-1h-1v-1h1zM616 492h1v1h1v1h-1v1h-1v-1h-1v-1h1zM617 496h1v1h1v1h-1v1h-1v-1h-1v-1h1zM617 500h1v1h1v1h-1v1h-1v-1h-1v-1h1zM617 504h1v1h1v1h-1v1h-1v-1h-1v-1h1zM617 507h1v1h1v1h-1v1h-1v-1h-1v-1h1zM617 511h1v1h1v1h-1v1h-1v-1h-1v-1h1zM617 515h1v1h1v1h-1v1h-1v-1h-1v-1h1zM616 519h1v1h1v1h-1v1h-1v-1h-1v-1h1zM615 523h1v1h1v1h-1v1h-1v-1h-1v-1h1zM614 527h1v1h1v1h-1v1h-1v-1h-1v-1h1zM612 530h1v1h1v1h-1v1h-1v-1h-1v-1h1zM611 534h1v1h1v1h-1v1h-1v-1h-1v-1h1zM609 537h1v1h1v1h-1v1h-1v-1h-1v-1h1zM607 540h1v1h1v1h-1v1h-1v-1h-1v-1h1zM604 544h1v1h1v1h-1v1h-1v-1h-1v-1h1zM602 547h1v1h1v1h-1v1h-1v-1h-1v-1h1zM599 549h1v1h1v1h-1v1h-1v-1h-1v-1h1zM597 552h1v1h1v1h-1v1h-1v-1h-1v-1h1zM594 554h1v1h1v1h-1v1h-1v-1h-1v-1h1zM590 557h1v1h1v1h-1v1h-1v-1h-1v-1h1zM587 559h1v1h1v1h-1v1h-1v-1h-1v-1h1zM584 561h1v1h1v1h-1v1h-1v-1h-1v-1h1zM580 562h1v1h1v1h-1v1h-1v-1h-1v-1h1zM577 564h1v1h1v1h-1v1h-1v-1h-1v-1h1zM573 565h1v1h1v1h-1v1h-1v-1h-1v-1h1zM569 566h1v1h1v1h-1v1h-1v-1h-1v-1h1zM565 567h1v1h1v1h-1v1h-1v-1h-1v-1h1zM561 567h1v1h1v1h-1v1h-1v-1h-1v-1h1zM557 567h1v1h1v1h-1v1h-1v-1h-1v-1h1zM554 567h1v1h1v1h-1v1h-1v-1h-1v-1h1zM550 567h1v1h1v1h-1v1h-1v-1h-1v-1h1zM546 567h1v1h1v1h-1v1h-1v-1h-1v-1h1zM542 566h1v1h1v1h-1v1h-1v-1h-1v-1h1zM538 565h1v1h1v1h-1v1h-1v-1h-1v-1h1zM534 564h1v1h1v1h-1v1h-1v-1h-1v-1h1zM531 562h1v1h1v1h-1v1h-1v-1h-1v-1h1zM527 561h1v1h1v1h-1v1h-1v-1h-1v-1h1zM524 559h1v1h1v1h-1v1h-1v-1h-1v-1h1zM521 557h1v1h1v1h-1v1h-1v-1h-1v-1h1zM517 554h1v1h1v1h-1v1h-1v-1h-1v-1h1zM514 552h1v1h1v1h-1v1h-1v-1h-1v-1h1zM512 549h1v1h1v1h-1v1h-1v-1h-1v-1h1zM509 547h1v1h1v1h-1v1h-1v-1h-1v-1h1zM507 544h1v1h1v1h-1v1h-1v-1h-1v-1h1zM504 540h1v1h1v1h-1v1h-1v-1h-1v-1h1zM502 537h1v1h1v1h-1v1h-1v-1h-1v-1h1zM500 534h1v1h1v1h-1v1h-1v-1h-1v-1h1zM499 530h1v1h1v1h-1v1h-1v-1h-1v-1h1zM497 527h1v1h1v1h-1v1h-1v-1h-1v-1h1zM496 523h1v1h1v1h-1v1h-1v-1h-1v-1h1zM495 519h1v1h1v1h-1v1h-1v-1h-1v-1h1zM494 515h1v1h1v1h-1v1h-1v-1h-1v-1h1zM494 511h1v1h1v1h-1v1h-1v-1h-1v-1h1zM494 507h1v1h1v1h-1v1h-1v-1h-1v-1h1zM494 504h1v1h1v1h-1v1h-1v-1h-1v-1h1zM494 500h1v1h1v1h-1v1h-1v-1h-1v-1h1zM494 496h1v1h1v1h-1v1h-1v-1h-1v-1h1zM495 492h1v1h1v1h-1v1h-1v-1h-1v-1h1zM496 488h1v1h1v1h-1v1h-1v-1h-1v-1h1zM497 484h1v1h1v1h-1v1h-1v-1h-1v-1h1zM499 481h1v1h1v1h-1v1h-1v-1h-1v-1h1zM500 477h1v1h1v1h-1v1h-1v-1h-1v-1h1zM502 474h1v1h1v1h-1v1h-1v-1h-1v-1h1zM504 471h1v1h1v1h-1v1h-1v-1h-1v-1h1zM507 467h1v1h1v1h-1v1h-1v-1h-1v-1h1zM509 464h1v1h1v1h-1v1h-1v-1h-1v-1h1zM512 462h1v1h1v1h-1v1h-1v-1h-1v-1h1zM514 459h1v1h1v1h-1v1h-1v-1h-1v-1h1zM517 457h1v1h1v1h-1v1h-1v-1h-1v-1h1zM521 454h1v1h1v1h-1v1h-1v-1h-1v-1h1zM524 452h1v1h1v1h-1v1h-1v-1h-1v-1h1zM527 450h1v1h1v1h-1v1h-1v-1h-1v-1h1zM531 449h1v1h1v1h-1v1h-1v-1h-1v-1h1zM534 447h1v1h1v1h-1v1h-1v-1h-1v-1h1zM538 446h1v1h1v1h-1v1h-1v-1h-1v-1h1zM542 445h1v1h1v1h-1v1h-1v-1h-1v-1h1zM546 444h1v1h1v1h-1v1h-1v-1h-1v-1h1zM550 444h1v1h1v1h-1v1h-1v-1h-1v-1h1zM554 444h1v1h1v1h-1v1h-1v-1h-1v-1h1z" fill="#1a5fa8" stroke="none"/><rect x="551.5" y="313.5" width="9" height="9" stroke="#000" stroke-width="1"/><rect x="555.20" y="316.70" width="1.6" height="1.6" fill="#1a5fa8" stroke="none"/><rect x="588.57" y="316.74" width="8.800" height="8.800" stroke="#000" stroke-width=".85" transform="rotate(11.25 592.97 321.14)" shape-rendering="auto"/><rect x="592.17" y="320.34" width="1.6" height="1.6" fill="#1a5fa8" stroke="none"/><rect x="624.12" y="327.52" width="8.800" height="8.800" stroke="#000" stroke-width=".85" transform="rotate(22.50 628.52 331.92)" shape-rendering="auto"/><rect x="627.72" y="331.12" width="1.6" height="1.6" fill="#1a5fa8" stroke="none"/><rect x="656.88" y="345.04" width="8.800" height="8.800" stroke="#000" stroke-width=".85" transform="rotate(33.75 661.28 349.44)" shape-rendering="auto"/><rect x="660.48" y="348.64" width="1.6" height="1.6" fill="#1a5fa8" stroke="none"/><rect x="685.60" y="368.60" width="8.800" height="8.800" stroke="#000" stroke-width=".85" transform="rotate(45.00 690.00 373.00)" shape-rendering="auto"/><rect x="689.20" y="372.20" width="1.6" height="1.6" fill="#1a5fa8" stroke="none"/><rect x="709.16" y="397.32" width="8.800" height="8.800" stroke="#000" stroke-width=".85" transform="rotate(56.25 713.56 401.72)" shape-rendering="auto"/><rect x="712.76" y="400.92" width="1.6" height="1.6" fill="#1a5fa8" stroke="none"/><rect x="726.68" y="430.08" width="8.800" height="8.800" stroke="#000" stroke-width=".85" transform="rotate(67.50 731.08 434.48)" shape-rendering="auto"/><rect x="730.28" y="433.68" width="1.6" height="1.6" fill="#1a5fa8" stroke="none"/><rect x="737.46" y="465.63" width="8.800" height="8.800" stroke="#000" stroke-width=".85" transform="rotate(78.75 741.86 470.03)" shape-rendering="auto"/><rect x="741.06" y="469.23" width="1.6" height="1.6" fill="#1a5fa8" stroke="none"/><rect x="741.5" y="502.5" width="8" height="9" stroke="#000" stroke-width="1"/><rect x="744.70" y="506.20" width="1.6" height="1.6" fill="#1a5fa8" stroke="none"/><rect x="737.46" y="539.57" width="8.800" height="8.800" stroke="#000" stroke-width=".85" transform="rotate(101.25 741.86 543.97)" shape-rendering="auto"/><rect x="741.06" y="543.17" width="1.6" height="1.6" fill="#1a5fa8" stroke="none"/><rect x="726.68" y="575.12" width="8.800" height="8.800" stroke="#000" stroke-width=".85" transform="rotate(112.50 731.08 579.52)" shape-rendering="auto"/><rect x="730.28" y="578.72" width="1.6" height="1.6" fill="#1a5fa8" stroke="none"/><rect x="709.16" y="607.88" width="8.800" height="8.800" stroke="#000" stroke-width=".85" transform="rotate(123.75 713.56 612.28)" shape-rendering="auto"/><rect x="712.76" y="611.48" width="1.6" height="1.6" fill="#1a5fa8" stroke="none"/><rect x="685.60" y="636.60" width="8.800" height="8.800" stroke="#000" stroke-width=".85" transform="rotate(135.00 690.00 641.00)" shape-rendering="auto"/><rect x="689.20" y="640.20" width="1.6" height="1.6" fill="#1a5fa8" stroke="none"/><rect x="656.88" y="660.16" width="8.800" height="8.800" stroke="#000" stroke-width=".85" transform="rotate(146.25 661.28 664.56)" shape-rendering="auto"/><rect x="660.48" y="663.76" width="1.6" height="1.6" fill="#1a5fa8" stroke="none"/><rect x="624.12" y="677.68" width="8.800" height="8.800" stroke="#000" stroke-width=".85" transform="rotate(157.50 628.52 682.08)" shape-rendering="auto"/><rect x="627.72" y="681.28" width="1.6" height="1.6" fill="#1a5fa8" stroke="none"/><rect x="588.57" y="688.46" width="8.800" height="8.800" stroke="#000" stroke-width=".85" transform="rotate(168.75 592.97 692.86)" shape-rendering="auto"/><rect x="592.17" y="692.06" width="1.6" height="1.6" fill="#1a5fa8" stroke="none"/><rect x="551.5" y="692.5" width="9" height="8" stroke="#000" stroke-width="1"/><rect x="555.20" y="695.70" width="1.6" height="1.6" fill="#1a5fa8" stroke="none"/><rect x="514.63" y="688.46" width="8.800" height="8.800" stroke="#000" stroke-width=".85" transform="rotate(191.25 519.03 692.86)" shape-rendering="auto"/><rect x="518.23" y="692.06" width="1.6" height="1.6" fill="#1a5fa8" stroke="none"/><rect x="479.08" y="677.68" width="8.800" height="8.800" stroke="#000" stroke-width=".85" transform="rotate(202.50 483.48 682.08)" shape-rendering="auto"/><rect x="482.68" y="681.28" width="1.6" height="1.6" fill="#1a5fa8" stroke="none"/><rect x="446.32" y="660.16" width="8.800" height="8.800" stroke="#000" stroke-width=".85" transform="rotate(213.75 450.72 664.56)" shape-rendering="auto"/><rect x="449.92" y="663.76" width="1.6" height="1.6" fill="#1a5fa8" stroke="none"/><rect x="417.60" y="636.60" width="8.800" height="8.800" stroke="#000" stroke-width=".85" transform="rotate(225.00 422.00 641.00)" shape-rendering="auto"/><rect x="421.20" y="640.20" width="1.6" height="1.6" fill="#1a5fa8" stroke="none"/><rect x="394.04" y="607.88" width="8.800" height="8.800" stroke="#000" stroke-width=".85" transform="rotate(236.25 398.44 612.28)" shape-rendering="auto"/><rect x="397.64" y="611.48" width="1.6" height="1.6" fill="#1a5fa8" stroke="none"/><rect x="376.52" y="575.12" width="8.800" height="8.800" stroke="#000" stroke-width=".85" transform="rotate(247.50 380.92 579.52)" shape-rendering="auto"/><rect x="380.12" y="578.72" width="1.6" height="1.6" fill="#1a5fa8" stroke="none"/><rect x="365.74" y="539.57" width="8.800" height="8.800" stroke="#000" stroke-width=".85" transform="rotate(258.75 370.14 543.97)" shape-rendering="auto"/><rect x="369.34" y="543.17" width="1.6" height="1.6" fill="#1a5fa8" stroke="none"/><rect x="361.5" y="502.5" width="9" height="9" stroke="#000" stroke-width="1"/><rect x="365.70" y="506.20" width="1.6" height="1.6" fill="#1a5fa8" stroke="none"/><rect x="365.74" y="465.63" width="8.800" height="8.800" stroke="#000" stroke-width=".85" transform="rotate(281.25 370.14 470.03)" shape-rendering="auto"/><rect x="369.34" y="469.23" width="1.6" height="1.6" fill="#1a5fa8" stroke="none"/><rect x="376.52" y="430.08" width="8.800" height="8.800" stroke="#000" stroke-width=".85" transform="rotate(292.50 380.92 434.48)" shape-rendering="auto"/><rect x="380.12" y="433.68" width="1.6" height="1.6" fill="#1a5fa8" stroke="none"/><rect x="394.04" y="397.32" width="8.800" height="8.800" stroke="#000" stroke-width=".85" transform="rotate(303.75 398.44 401.72)" shape-rendering="auto"/><rect x="397.64" y="400.92" width="1.6" height="1.6" fill="#1a5fa8" stroke="none"/><rect x="417.60" y="368.60" width="8.800" height="8.800" stroke="#000" stroke-width=".85" transform="rotate(315.00 422.00 373.00)" shape-rendering="auto"/><rect x="421.20" y="372.20" width="1.6" height="1.6" fill="#1a5fa8" stroke="none"/><rect x="446.32" y="345.04" width="8.800" height="8.800" stroke="#000" stroke-width=".85" transform="rotate(326.25 450.72 349.44)" shape-rendering="auto"/><rect x="449.92" y="348.64" width="1.6" height="1.6" fill="#1a5fa8" stroke="none"/><rect x="479.08" y="327.52" width="8.800" height="8.800" stroke="#000" stroke-width=".85" transform="rotate(337.50 483.48 331.92)" shape-rendering="auto"/><rect x="482.68" y="331.12" width="1.6" height="1.6" fill="#1a5fa8" stroke="none"/><rect x="514.63" y="316.74" width="8.800" height="8.800" stroke="#000" stroke-width=".85" transform="rotate(348.75 519.03 321.14)" shape-rendering="auto"/><rect x="518.23" y="320.34" width="1.6" height="1.6" fill="#1a5fa8" stroke="none"/><path d="M322 507.5H790" stroke="#ff0000" stroke-width="1" stroke-dasharray="59 2"/><text x="688" y="504" font-size="7" fill="#000" stroke="none" text-anchor="middle" font-weight="normal">0度</text><path d="M351.5 508L351.5 744" stroke="#000" stroke-width="1" /><path d="M760.5 508L760.5 744" stroke="#000" stroke-width="1" /><path d="M351 740.5L761 740.5" stroke="#000" stroke-width="1" /><path d="M465.5 508L465.5 658" stroke="#000" stroke-width="1" /><path d="M646.5 508L646.5 658" stroke="#000" stroke-width="1" /><path d="M465 655.5L647 655.5" stroke="#000" stroke-width="1" /><path d="M491.5 508L491.5 630" stroke="#000" stroke-width="1" /><path d="M620.5 508L620.5 630" stroke="#000" stroke-width="1" /><path d="M491 627.5L621 627.5" stroke="#000" stroke-width="1" /><text x="556" y="626.5" font-size="6" fill="#000" stroke="none" text-anchor="middle" font-weight="normal">4421</text><text x="556" y="632" font-size="4.5" fill="#000" stroke="none" text-anchor="middle" font-weight="bold">塔筒直径</text><text x="556" y="654.5" font-size="6" fill="#000" stroke="none" text-anchor="middle" font-weight="normal">6200</text><text x="556" y="660" font-size="4.5" fill="#000" stroke="none" text-anchor="middle" font-weight="bold">台柱直径</text><text x="556" y="739.5" font-size="6" fill="#000" stroke="none" text-anchor="middle" font-weight="normal">14000</text><text x="556" y="745" font-size="4.5" fill="#000" stroke="none" text-anchor="middle" font-weight="bold">基础承台直径</text><path d="M869 463.5L965 463.5" stroke="#1a5fa8" stroke-width="1" /><path d="M899.5 463.5L935.5 536.5" stroke="#1a5fa8" stroke-width="1" shape-rendering="auto"/><path d="M935 536.5L965 536.5" stroke="#1a5fa8" stroke-width="1" /><path d="M961.5 539.5H1066.5L1078.5 550.5H1259.500L1270.500 539.500H1376" stroke="#1a5fa8" stroke-width="1" fill="none" shape-rendering="auto"/><path d="M1067.5 536.5L1078.5 545.5H1259.500L1269.500 536.500" stroke="#1a5fa8" stroke-width="1" fill="none" shape-rendering="auto"/><path d="M1388 463.5L1403 463.5" stroke="#1a5fa8" stroke-width="1" /><path d="M1422 463.5L1468 463.5" stroke="#1a5fa8" stroke-width="1" /><path d="M1439.5 463.5L1402.5 536.5" stroke="#1a5fa8" stroke-width="1" shape-rendering="auto"/><path d="M1392 536.5L1403 536.5" stroke="#1a5fa8" stroke-width="1" /><path d="M964 463.5L1079 463.5" stroke="#000" stroke-width="1" /><path d="M1078.5 448L1078.5 464" stroke="#000" stroke-width="1" /><path d="M1078 448.5L1260 448.5" stroke="#000" stroke-width="1" /><path d="M1259.5 448L1259.5 464" stroke="#000" stroke-width="1" /><path d="M1259 463.5L1388 463.5" stroke="#000" stroke-width="1" /><path d="M1403 463.5L1417 463.5" stroke="#000" stroke-width="1" /><path d="M1417 463.5L1422 463.5" stroke="#ff0000" stroke-width="1" /><path d="M964 536.5L1392 536.5" stroke="#000" stroke-width="1" /><path d="M1403 536.5L1420 536.5" stroke="#000" stroke-width="1" /><path d="M964.5 463L964.5 688" stroke="#000" stroke-width="1" /><path d="M961.5 539L961.5 688" stroke="#000" stroke-width="1" /><path d="M1372.5 537L1372.5 686" stroke="#000" stroke-width="1" /><path d="M1375.5 537L1375.5 686" stroke="#000" stroke-width="1" /><path d="M1078 396.5L1260 396.5" stroke="#000" stroke-width="1" /><path d="M1078.5 394L1078.5 448" stroke="#000" stroke-width="1" /><path d="M1126.5 394L1126.5 448" stroke="#000" stroke-width="1" /><path d="M1210.5 394L1210.5 448" stroke="#000" stroke-width="1" /><path d="M1259.5 394L1259.5 448" stroke="#000" stroke-width="1" /><text x="1102" y="396" font-size="6" fill="#000" stroke="none" text-anchor="middle" font-weight="normal">1650</text><text x="1102" y="400.5" font-size="4.5" fill="#000" stroke="none" text-anchor="middle" font-weight="bold">台柱环梁宽度</text><text x="1168" y="396" font-size="6" fill="#000" stroke="none" text-anchor="middle" font-weight="normal">2100</text><text x="1235" y="396" font-size="6" fill="#000" stroke="none" text-anchor="middle" font-weight="normal">1650</text><path d="M1168.5 419V537" stroke="#ff0000" stroke-width="1" stroke-dasharray="47 1.5"/><path d="M1168.5 539L1168.5 686" stroke="#000" stroke-width="1" /><rect x="977" y="463" width="3" height="77" fill="#000" stroke="none"/><rect x="977" y="539" width="4" height="107" fill="#000" stroke="none"/><path d="M974 460.5L984 460.5" stroke="#000" stroke-width="1" /><rect x="974" y="461" width="9" height="9" fill="#ff0000" stroke="none"/><rect x="978" y="453" width="2" height="7" fill="#1a5fa8" stroke="none"/><rect x="980" y="454" width="1" height="1" fill="#1a5fa8" stroke="none"/><path d="M962.5 536L962.5 540" stroke="#1a5fa8" stroke-width="1" /><rect x="978" y="646" width="2" height="41" fill="#1a5fa8" stroke="none"/><path d="M977.5 646L977.5 687" stroke="#000" stroke-width="1" /><path d="M980.5 646L980.5 690" stroke="#000" stroke-width="1" /><path d="M977.5 686.500L975.5 703V714.500H982.5V703L980.5 690" stroke="#000" stroke-width="1" fill="#fff" shape-rendering="auto"/><path d="M978.5 687L976.6 703.500V712M979.5 688L981.4 703.500V712" stroke="#1a5fa8" stroke-width="1.300" fill="none" shape-rendering="auto"/><path d="M976.5 712.500H981.5" stroke="#1a5fa8" stroke-width="1" fill="none" shape-rendering="auto"/><path d="M1357.5 469L1357.5 646" stroke="#000" stroke-width="1" /><path d="M1359.5 469L1359.5 646" stroke="#000" stroke-width="1" /><rect x="1357" y="626" width="3" height="14" fill="#000" stroke="none"/><path d="M1353 460.5L1364 460.5" stroke="#000" stroke-width="1" /><rect x="1354" y="461" width="9" height="9" fill="#ff0000" stroke="none"/><path d="M1357.5 453L1357.5 460" stroke="#1a5fa8" stroke-width="1" /><path d="M1359.5 453L1359.5 460" stroke="#1a5fa8" stroke-width="1" /><rect x="1358" y="454" width="1" height="1" fill="#1a5fa8" stroke="none"/><rect x="1358" y="646" width="1" height="41" fill="#1a5fa8" stroke="none"/><path d="M1357.5 646L1357.5 687" stroke="#000" stroke-width="1" /><path d="M1359.5 646L1359.5 690" stroke="#000" stroke-width="1" /><path d="M1357.5 686.500L1355.5 703V714.500H1361.5V703L1359.5 690" stroke="#000" stroke-width="1" fill="#fff" shape-rendering="auto"/><path d="M1358.5 687L1356.6 703.500V712M1358.5 688L1360.4 703.500V712" stroke="#1a5fa8" stroke-width="1.300" fill="none" shape-rendering="auto"/><path d="M1356.5 712.500H1360.5" stroke="#1a5fa8" stroke-width="1" fill="none" shape-rendering="auto"/><path d="M1101 441h7v1h-7zM1101 442h2v98h-2zM1105 442h1v95h-1zM1107 442h1v98h-1z" fill="#1a5fa8" stroke="none"/><rect x="1103.2" y="436" width="1.600" height="9" fill="#000" stroke="none" shape-rendering="auto"/><path d="M1098.2 444H1109.8L1110.6 447.500H1111.3L1113.1 449.800V452H1094.9V449.800L1096.7 447.500H1097.4Z" fill="#000" stroke="none" shape-rendering="auto"/><path d="M1103 446h1v1h-1zM1106 446h1v1h-1z" fill="#1a5fa8" stroke="none"/><rect x="1097.0" y="536" width="14" height="3" fill="#000" stroke="none"/><rect x="1103.5" y="537" width="1" height="1" fill="#1a5fa8" stroke="none"/><rect x="1099.5" y="539" width="9" height="2" fill="#1a5fa8" stroke="none" shape-rendering="auto"/><rect x="1103.0" y="541" width="2" height="4" fill="#1a5fa8" stroke="none"/><rect x="1098.0" y="545" width="12" height="2" fill="#000" stroke="none"/><path d="M1101.5 547L1101.5 551" stroke="#000" stroke-width="1" /><path d="M1107.5 547L1107.5 551" stroke="#000" stroke-width="1" /><path d="M1230 441h7v1h-7zM1230 442h2v98h-2zM1234 442h1v95h-1zM1236 442h1v98h-1z" fill="#1a5fa8" stroke="none"/><rect x="1232.2" y="436" width="1.600" height="9" fill="#000" stroke="none" shape-rendering="auto"/><path d="M1227.2 444H1238.8L1239.6 447.500H1240.3L1242.1 449.800V452H1223.9V449.800L1225.7 447.500H1226.4Z" fill="#000" stroke="none" shape-rendering="auto"/><path d="M1232 446h1v1h-1zM1235 446h1v1h-1z" fill="#1a5fa8" stroke="none"/><rect x="1226.0" y="536" width="14" height="3" fill="#000" stroke="none"/><rect x="1232.5" y="537" width="1" height="1" fill="#1a5fa8" stroke="none"/><rect x="1228.5" y="539" width="9" height="2" fill="#1a5fa8" stroke="none" shape-rendering="auto"/><rect x="1232.0" y="541" width="2" height="4" fill="#1a5fa8" stroke="none"/><rect x="1227.0" y="545" width="12" height="2" fill="#000" stroke="none"/><path d="M1230.5 547L1230.5 551" stroke="#000" stroke-width="1" /><path d="M1236.5 547L1236.5 551" stroke="#000" stroke-width="1" /><path d="M1260 448.5H1273M1263.5 444.500H1290M1263.500 444.500l4 4 4-4" stroke="#ff0000" stroke-width="1" fill="none"/><text x="1276.5" y="443" font-size="6" fill="#ff0000" stroke="none" text-anchor="middle" font-weight="normal">0.500</text><path d="M1412.500 459.500H1439M1412.500 459.500l4 4 4-4" stroke="#ff0000" stroke-width="1" fill="none"/><text x="1425.5" y="458" font-size="6" fill="#ff0000" stroke="none" text-anchor="middle" font-weight="normal">0.000</text><text x="1454.5" y="462.5" font-size="7" fill="#000" stroke="none" text-anchor="middle" font-weight="bold">地面</text><path d="M1371 448.5L1390 448.5" stroke="#000" stroke-width="1" /><path d="M1378.5 448L1378.5 464" stroke="#000" stroke-width="1" /><path d="M1387.5 448L1387.5 545" stroke="#000" stroke-width="1" /><path d="M1416.5 463L1416.5 712" stroke="#000" stroke-width="1" /><path d="M1403 641.5L1418 641.5" stroke="#000" stroke-width="1" /><path d="M1403 676.5L1418 676.5" stroke="#000" stroke-width="1" /><path d="M1403 711.5L1418 711.5" stroke="#000" stroke-width="1" /><text x="1376.5" y="456" font-size="6" fill="#000" stroke="none" text-anchor="middle" font-weight="normal" transform="rotate(-90 1376.5 456)">500</text><text x="1386" y="456" font-size="6.5" fill="#000" stroke="none" text-anchor="middle" font-weight="bold" transform="rotate(-90 1386 456)">500</text><text x="1390" y="500" font-size="6.5" fill="#000" stroke="none" text-anchor="middle" font-weight="bold" transform="rotate(-90 1390 500)">2500</text><text x="1416" y="498" font-size="6.5" fill="#000" stroke="none" text-anchor="middle" font-weight="bold" transform="rotate(-90 1416 498)">2500</text><text x="1389" y="541" font-size="6.5" fill="#000" stroke="none" text-anchor="middle" font-weight="bold" transform="rotate(-90 1389 541)">100</text><text x="1416" y="588" font-size="6" fill="#000" stroke="none" text-anchor="middle" font-weight="normal" transform="rotate(-90 1416 588)">3500</text><text x="1416" y="659" font-size="6" fill="#000" stroke="none" text-anchor="middle" font-weight="normal" transform="rotate(-90 1416 659)">1500</text><text x="1416" y="694" font-size="6" fill="#000" stroke="none" text-anchor="middle" font-weight="normal" transform="rotate(-90 1416 694)">1500</text><path d="M898.5 536L898.5 559" stroke="#000" stroke-width="1" /><path d="M935.5 536L935.5 559" stroke="#000" stroke-width="1" /><path d="M898 558.5L966 558.5" stroke="#000" stroke-width="1" /><text x="917" y="557.5" font-size="6" fill="#000" stroke="none" text-anchor="middle" font-weight="normal">1250</text><text x="949" y="557.5" font-size="6" fill="#000" stroke="none" text-anchor="middle" font-weight="normal">1050</text><text x="916" y="562.5" font-size="4.5" fill="#000" stroke="none" text-anchor="middle" font-weight="bold">基坑坡宽 1050</text><path d="M1066.5 539L1066.5 598" stroke="#000" stroke-width="1" /><path d="M1078.5 539L1078.5 598" stroke="#000" stroke-width="1" /><path d="M1259.5 539L1259.5 598" stroke="#000" stroke-width="1" /><path d="M1270.5 539L1270.5 598" stroke="#000" stroke-width="1" /><path d="M1066 597.5L1272 597.5" stroke="#000" stroke-width="1" /><text x="1072" y="597" font-size="6" fill="#000" stroke="none" text-anchor="middle" font-weight="normal">400</text><text x="1072" y="602" font-size="4.5" fill="#000" stroke="none" text-anchor="middle" font-weight="bold">凹槽外扩宽度</text><text x="1124" y="597" font-size="6" fill="#000" stroke="none" text-anchor="middle" font-weight="normal">3100</text><text x="1124" y="602" font-size="4.5" fill="#000" stroke="none" text-anchor="middle" font-weight="bold">凹槽半径</text><text x="1214" y="597" font-size="6" fill="#000" stroke="none" text-anchor="middle" font-weight="normal">3100</text><text x="1265" y="597" font-size="6" fill="#000" stroke="none" text-anchor="middle" font-weight="normal">400</text><text x="1183" y="544" font-size="6.5" fill="#000" stroke="none" text-anchor="middle" font-weight="bold" transform="rotate(-90 1183 544)">2300</text><path d="M1173 545.5L1181 545.5" stroke="#000" stroke-width="1" /><path d="M1173 550.5L1181 550.5" stroke="#000" stroke-width="1" /><path d="M964 638.5L1374 638.5" stroke="#000" stroke-width="1" /><path d="M961 685.5L1377 685.5" stroke="#000" stroke-width="1" /><text x="971" y="638" font-size="6" fill="#000" stroke="none" text-anchor="middle" font-weight="normal">600</text><text x="1074" y="638" font-size="6" fill="#000" stroke="none" text-anchor="middle" font-weight="normal">6400</text><text x="1264" y="638" font-size="6" fill="#000" stroke="none" text-anchor="middle" font-weight="normal">6400</text><text x="1264" y="643" font-size="4.5" fill="#000" stroke="none" text-anchor="middle" font-weight="bold">锚杆半径</text><text x="1366" y="638" font-size="6" fill="#000" stroke="none" text-anchor="middle" font-weight="normal">600</text><text x="979" y="667" font-size="6" fill="#000" stroke="none" text-anchor="middle" font-weight="normal">120</text><text x="1358" y="667" font-size="6" fill="#000" stroke="none" text-anchor="middle" font-weight="normal">120</text><text x="963" y="685" font-size="6" fill="#000" stroke="none" text-anchor="middle" font-weight="normal">100</text><text x="963" y="690" font-size="4.5" fill="#000" stroke="none" text-anchor="middle" font-weight="bold">垫层外扩宽度</text><text x="1066" y="685" font-size="6" fill="#000" stroke="none" text-anchor="middle" font-weight="normal">7000</text><text x="1066" y="690" font-size="4.5" fill="#000" stroke="none" text-anchor="middle" font-weight="bold">基础承台半径</text><text x="1271" y="685" font-size="6" fill="#000" stroke="none" text-anchor="middle" font-weight="normal">7000</text><text x="1375" y="685" font-size="6" fill="#000" stroke="none" text-anchor="middle" font-weight="normal">100</text></svg><div class="abs" style="left:194px;top:832px;width:167px;height:31px;background:#676767;border-radius:5px"></div><div class="t" style="left:197px;top:841px;font-size:13px;font-weight:bold;color:#fff;width:52.06px;text-align:justify;text-align-last:justify;white-space:nowrap">显示设置</div><div class="abs" style="left:257px;top:841px;width:12px;height:12px;border-radius:6px;background:radial-gradient(circle at 50% 50%,#0a4f8c 0,#1b7fc6 2.300px,#f4f4f4 3.300px,#f0f0f0 4.600px,rgba(200,200,200,.9) 5.200px,rgba(160,160,160,0) 5.700px)"></div><div class="t" style="left:275px;top:841px;font-size:13px;font-weight:bold;color:#fff;width:26.06px;text-align:justify;text-align-last:justify;white-space:nowrap">模型</div><div class="abs" style="left:310px;top:841px;width:12px;height:12px;border-radius:6px;background:radial-gradient(circle at 50% 50%,#f6f6f6 0,#e4e4e4 3.300px,#d2d2d2 4.600px,rgba(170,170,170,.9) 5.200px,rgba(150,150,150,0) 5.700px)"></div><div class="t" style="left:328px;top:841px;font-size:13px;font-weight:bold;color:#fff;width:26.06px;text-align:justify;text-align-last:justify;white-space:nowrap">内力</div><div class="abs" style="left:179px;top:883px;width:1433px;height:20px;background:#d9d9d9"></div><div class="abs" style="left:179px;top:903px;width:1433px;height:173px;background:#fff"></div><div class="th" style="left:184px;width:24.06px;text-align:justify;text-align-last:justify;white-space:nowrap">项目</div><div class="th" style="left:430px;width:24.06px;text-align:justify;text-align-last:justify;white-space:nowrap">结果</div><div class="th" style="left:948px;width:24.06px;text-align:justify;text-align-last:justify;white-space:nowrap">项目</div><div class="th" style="left:1099px;width:24.06px;text-align:justify;text-align-last:justify;white-space:nowrap">结果</div><div class="abs" style="left:179px;top:902px;width:246px;height:30px;background:#3399ff"></div><div class="td" style="left:182px;top:911px;color:#fff;width:130.26px;text-align:justify;text-align-last:justify;white-space:nowrap">锚索预应力复核验算 <span style="font-size:11px;letter-spacing:3px">&gt;&gt;</span></div><div class="td tdb" style="left:428px;top:911px;width:192.06px;text-align:justify;text-align-last:justify;white-space:nowrap">锚索预应力复核验算满足设计要求。</div><div class="td" style="left:947px;top:911px;width:130.26px;text-align:justify;text-align-last:justify;white-space:nowrap">岩石抗剪承载力验算 <span style="font-size:11px;letter-spacing:3px">&gt;&gt;</span></div><div class="td tdb" style="left:1097px;top:911px;width:438.09px;text-align:justify;text-align-last:justify;white-space:nowrap">岩石抗剪承载力验算满足《风机基础预应力扩底岩石锚索技术规程》 8.2.5条规定。</div><div class="abs" style="left:179px;top:932px;width:1433px;height:30px;background:#e8e8e8"></div><div class="td" style="left:182px;top:941px;width:130.26px;text-align:justify;text-align-last:justify;white-space:nowrap">索体受拉承载力验算 <span style="font-size:11px;letter-spacing:3px">&gt;&gt;</span></div><div class="td tdb" style="left:428px;top:941px;width:450.09px;text-align:justify;text-align-last:justify;white-space:nowrap">锚索索体的受拉承载力满足《风机基础预应力扩底岩石锚索技术规程》 8.2.2条规定。</div><div class="td" style="left:947px;top:941px;width:94.26px;text-align:justify;text-align-last:justify;white-space:nowrap">基础抗剪验算 <span style="font-size:11px;letter-spacing:3px">&gt;&gt;</span></div><div class="td tdb" style="left:1097px;top:941px;width:402.09px;text-align:justify;text-align-last:justify;white-space:nowrap">地基抗剪验算满足《陆上风电场工程风电机组基础设计规范》 7.2.9条规定。</div><div class="td" style="left:182px;top:971px;width:238.26px;text-align:justify;text-align-last:justify;white-space:nowrap">锚固段注浆体与索体之间的黏结强度验算 <span style="font-size:11px;letter-spacing:3px">&gt;&gt;</span></div><div class="td tdb" style="left:428px;top:971px;width:474.09px;text-align:justify;text-align-last:justify;white-space:nowrap">岩注浆体与索体黏结强度验满足《风机基础预应力扩底岩石锚索技术规程》 8.2.3条规定。</div><div class="td" style="left:947px;top:971px;width:106.26px;text-align:justify;text-align-last:justify;white-space:nowrap">基础抗冲切验算 <span style="font-size:11px;letter-spacing:3px">&gt;&gt;</span></div><div class="td tdb" style="left:1097px;top:971px;width:414.09px;text-align:justify;text-align-last:justify;white-space:nowrap">地基抗冲切验算满足《陆上风电场工程风电机组基础设计规范》 7.2.7条规定。</div><div class="abs" style="left:179px;top:992px;width:1433px;height:30px;background:#e8e8e8"></div><div class="td" style="left:182px;top:1001px;width:238.26px;text-align:justify;text-align-last:justify;white-space:nowrap">锚固段注浆体与岩层之间的黏结强度验算 <span style="font-size:11px;letter-spacing:3px">&gt;&gt;</span></div><div class="td tdb" style="left:428px;top:1001px;width:462.09px;text-align:justify;text-align-last:justify;white-space:nowrap">注浆体与岩层黏结强度验满足《风机基础预应力扩底岩石锚索技术规程》 8.2.3条规定。</div><div class="td" style="left:947px;top:1001px">/</div><div class="td tdb" style="left:1097px;top:1001px">/</div><div class="abs" style="left:179px;top:1022px;width:1433px;height:5px;background:#efefef"></div><div class="abs" style="left:1365px;top:1037px;width:144px;height:30px;background:#2b579a;border-radius:4px"></div><div class="t" style="left:1365px;top:1046px;width:144px;text-align:center;font-size:12px;color:#fff">添加到备选方案&gt;&gt;</div><div class="abs" style="left:1515px;top:1037px;width:94px;height:30px;background:#fff;border:1px solid #dcdcdc;border-radius:4px"></div><div class="t" style="left:1515px;top:1046px;width:94px;text-align:center;font-size:12px;color:#111">关闭</div><div class="abs" style="left:1612px;top:171px;width:1px;height:905px;background:#a8a8a8"></div><div class="abs" style="left:1619px;top:210px;width:294px;height:863px;background:#f8f8f8"></div><div class="t" style="left:1625px;top:185px;font-size:12px;color:#444;width:48.06px;text-align:justify;text-align-last:justify;white-space:nowrap">基础编辑</div><div class="abs" style="left:1897px;top:190px;width:0;height:0;border-left:4.500px solid transparent;border-right:4.500px solid transparent;border-top:5px solid #555"></div><div class="abs" style="left:1630px;top:222px;width:58px;height:24px;background:#2b579a;border-radius:5px"></div><div class="t" style="left:1630px;top:228px;width:58px;text-align:center;font-size:12px;color:#fff">应用</div><div class="sec" style="top:260px"><svg class="abs" style="left:0;top:0" width="40" height="27" viewBox="0 0 40 27" fill="none" stroke="#111" stroke-width="2.1"><path d="M16.700 7.200L24.300 12L16.700 16.800"/></svg><span class="sc" style="width:56.06px;text-align:justify;text-align-last:justify;white-space:nowrap">基本信息</span><u></u></div><div class="sec" style="top:291px"><svg class="abs" style="left:0;top:0" width="40" height="27" viewBox="0 0 40 27" fill="none" stroke="#111" stroke-width="1.700"><path d="M15 8.300L19.700 16.500L24.400 8.300"/></svg><span class="sc" style="width:56.06px;text-align:justify;text-align-last:justify;white-space:nowrap">基础尺寸</span><u></u></div><div class="sub" style="top:327px;width:72.06px;text-align:justify;text-align-last:justify;white-space:nowrap">基础尺寸信息</div><div class="subl" style="top:345px"></div><div class="row" style="top:357px;width:78.42px;text-align:justify;text-align-last:justify;white-space:nowrap">台柱顶标高 <span style="font-family:'Liberation Mono',monospace;font-size:10px;margin-left:3px">mm</span></div><div class="inp" style="left:1746px;top:352px;width:162px"><b>500</b><svg viewBox="0 0 9 20" fill="none" stroke="#777" stroke-width="1"><path d="M1 5.800l3.500-3.500 3.500 3.500M1 14.700l3.500 3.500 3.500-3.500"/></svg></div><div class="row" style="top:387px;width:66.42px;text-align:justify;text-align-last:justify;white-space:nowrap">覆土厚度 <span style="font-family:'Liberation Mono',monospace;font-size:10px;margin-left:3px">mm</span></div><div class="inp" style="left:1746px;top:382px;width:162px"><b>0</b><svg viewBox="0 0 9 20" fill="none" stroke="#777" stroke-width="1"><path d="M1 5.800l3.500-3.500 3.500 3.500M1 14.700l3.500 3.500 3.500-3.500"/></svg></div><div class="row" style="top:417px;width:90.42px;text-align:justify;text-align-last:justify;white-space:nowrap">基础承台半径 <span style="font-family:'Liberation Mono',monospace;font-size:10px;margin-left:3px">mm</span></div><div class="inp" style="left:1746px;top:412px;width:162px"><b>7000</b><svg viewBox="0 0 9 20" fill="none" stroke="#777" stroke-width="1"><path d="M1 5.800l3.500-3.500 3.500 3.500M1 14.700l3.500 3.500 3.500-3.500"/></svg></div><div class="row" style="top:447px;width:66.42px;text-align:justify;text-align-last:justify;white-space:nowrap">台柱半径 <span style="font-family:'Liberation Mono',monospace;font-size:10px;margin-left:3px">mm</span></div><div class="inp" style="left:1746px;top:442px;width:162px"><b>3100</b><svg viewBox="0 0 9 20" fill="none" stroke="#777" stroke-width="1"><path d="M1 5.800l3.500-3.500 3.500 3.500M1 14.700l3.500 3.500 3.500-3.500"/></svg></div><div class="row" style="top:477px;width:66.42px;text-align:justify;text-align-last:justify;white-space:nowrap">塔筒半径 <span style="font-family:'Liberation Mono',monospace;font-size:10px;margin-left:3px">mm</span></div><div class="inp" style="left:1746px;top:472px;width:162px;color:#8a8a8a"><b>2210.5</b><svg viewBox="0 0 9 20" fill="none" stroke="#777" stroke-width="1"><path d="M1 5.800l3.500-3.500 3.500 3.500M1 14.700l3.500 3.500 3.500-3.500"/></svg></div><div class="row" style="top:507px;width:66.42px;text-align:justify;text-align-last:justify;white-space:nowrap">台柱高度 <span style="font-family:'Liberation Mono',monospace;font-size:10px;margin-left:3px">mm</span></div><div class="inp" style="left:1746px;top:502px;width:162px"><b>500</b><svg viewBox="0 0 9 20" fill="none" stroke="#777" stroke-width="1"><path d="M1 5.800l3.500-3.500 3.500 3.500M1 14.700l3.500 3.500 3.500-3.500"/></svg></div><div class="row" style="top:537px;width:66.42px;text-align:justify;text-align-last:justify;white-space:nowrap">棱台高度 <span style="font-family:'Liberation Mono',monospace;font-size:10px;margin-left:3px">mm</span></div><div class="inp" style="left:1746px;top:532px;width:162px;color:#8a8a8a"><b>0</b><svg viewBox="0 0 9 20" fill="none" stroke="#777" stroke-width="1"><path d="M1 5.800l3.500-3.500 3.500 3.500M1 14.700l3.500 3.500 3.500-3.500"/></svg></div><div class="row" style="top:567px;width:90.42px;text-align:justify;text-align-last:justify;white-space:nowrap">承台边缘高度 <span style="font-family:'Liberation Mono',monospace;font-size:10px;margin-left:3px">mm</span></div><div class="inp" style="left:1746px;top:562px;width:162px"><b>2500</b><svg viewBox="0 0 9 20" fill="none" stroke="#777" stroke-width="1"><path d="M1 5.800l3.500-3.500 3.500 3.500M1 14.700l3.500 3.500 3.500-3.500"/></svg></div><div class="row" style="top:597px;width:90.42px;text-align:justify;text-align-last:justify;white-space:nowrap">台柱环梁宽度 <span style="font-family:'Liberation Mono',monospace;font-size:10px;margin-left:3px">mm</span></div><div class="inp" style="left:1746px;top:592px;width:162px"><b>1650</b><svg viewBox="0 0 9 20" fill="none" stroke="#777" stroke-width="1"><path d="M1 5.800l3.500-3.500 3.500 3.500M1 14.700l3.500 3.500 3.500-3.500"/></svg></div><div class="blue" style="top:626px;width:156.08px;text-align:justify;text-align-last:justify;white-space:nowrap">内侧钢筋净距<span class="mo">: 63mm &gt;= 50mm</span></div><div class="row" style="top:657px;width:66.42px;text-align:justify;text-align-last:justify;white-space:nowrap">基坑扩宽 <span style="font-family:'Liberation Mono',monospace;font-size:10px;margin-left:3px">mm</span></div><div class="inp" style="left:1746px;top:652px;width:162px"><b>1000</b><svg viewBox="0 0 9 20" fill="none" stroke="#777" stroke-width="1"><path d="M1 5.800l3.500-3.500 3.500 3.500M1 14.700l3.500 3.500 3.500-3.500"/></svg></div><div class="row" style="top:687px;width:92.06px;text-align:justify;text-align-last:justify;white-space:nowrap">基坑坡度(宽高比)</div><div class="inp" style="left:1746px;top:682px;width:162px"><b>0.50</b><svg viewBox="0 0 9 20" fill="none" stroke="#777" stroke-width="1"><path d="M1 5.800l3.500-3.500 3.500 3.500M1 14.700l3.500 3.500 3.500-3.500"/></svg></div><div class="blue" style="top:716px;width:192.11px;text-align:justify;text-align-last:justify;white-space:nowrap">混凝土体积<span class="mo">: 400m<sup>3</sup>&nbsp;&nbsp;</span>土方<span class="mo">: 621.4m<sup>3</sup></span></div><div class="sub" style="top:747px;width:84.06px;text-align:justify;text-align-last:justify;white-space:nowrap">垫层及凹槽信息</div><div class="subl" style="top:765px"></div><div class="row" style="top:776px;width:66.42px;text-align:justify;text-align-last:justify;white-space:nowrap">垫层厚度 <span style="font-family:'Liberation Mono',monospace;font-size:10px;margin-left:3px">mm</span></div><div class="inp" style="left:1752px;top:771px;width:156px"><b>100</b><svg viewBox="0 0 9 20" fill="none" stroke="#777" stroke-width="1"><path d="M1 5.800l3.500-3.500 3.500 3.500M1 14.700l3.500 3.500 3.500-3.500"/></svg></div><div class="row" style="top:806px;width:90.42px;text-align:justify;text-align-last:justify;white-space:nowrap">垫层外扩宽度 <span style="font-family:'Liberation Mono',monospace;font-size:10px;margin-left:3px">mm</span></div><div class="inp" style="left:1752px;top:801px;width:156px"><b>100</b><svg viewBox="0 0 9 20" fill="none" stroke="#777" stroke-width="1"><path d="M1 5.800l3.500-3.500 3.500 3.500M1 14.700l3.500 3.500 3.500-3.500"/></svg></div><div class="row" style="top:836px;width:66.42px;text-align:justify;text-align-last:justify;white-space:nowrap">凹槽半径 <span style="font-family:'Liberation Mono',monospace;font-size:10px;margin-left:3px">mm</span></div><div class="inp" style="left:1752px;top:831px;width:156px"><b>3100</b><svg viewBox="0 0 9 20" fill="none" stroke="#777" stroke-width="1"><path d="M1 5.800l3.500-3.500 3.500 3.500M1 14.700l3.500 3.500 3.500-3.500"/></svg></div><div class="row" style="top:866px;width:66.42px;text-align:justify;text-align-last:justify;white-space:nowrap">凹槽深度 <span style="font-family:'Liberation Mono',monospace;font-size:10px;margin-left:3px">mm</span></div><div class="inp" style="left:1752px;top:861px;width:156px"><b>300</b><svg viewBox="0 0 9 20" fill="none" stroke="#777" stroke-width="1"><path d="M1 5.800l3.500-3.500 3.500 3.500M1 14.700l3.500 3.500 3.500-3.500"/></svg></div><div class="row" style="top:896px;width:90.42px;text-align:justify;text-align-last:justify;white-space:nowrap">凹槽外扩宽度 <span style="font-family:'Liberation Mono',monospace;font-size:10px;margin-left:3px">mm</span></div><div class="inp" style="left:1752px;top:891px;width:156px"><b>400</b><svg viewBox="0 0 9 20" fill="none" stroke="#777" stroke-width="1"><path d="M1 5.800l3.500-3.500 3.500 3.500M1 14.700l3.500 3.500 3.500-3.500"/></svg></div><div class="row" style="top:926px;width:102.42px;text-align:justify;text-align-last:justify;white-space:nowrap">凹槽下垫层厚度 <span style="font-family:'Liberation Mono',monospace;font-size:10px;margin-left:3px">mm</span></div><div class="inp" style="left:1752px;top:921px;width:156px"><b>200</b><svg viewBox="0 0 9 20" fill="none" stroke="#777" stroke-width="1"><path d="M1 5.800l3.500-3.500 3.500 3.500M1 14.700l3.500 3.500 3.500-3.500"/></svg></div><div class="blue" style="top:956px;width:204.11px;text-align:justify;text-align-last:justify;white-space:nowrap">凹槽体积<span class="mo">: 10.3m<sup>3</sup>&nbsp;&nbsp;</span>垫层体积<span class="mo">: 18.4m<sup>3</sup></span></div><div class="abs" style="left:1639px;top:986px;width:13px;height:13px;background:#e4e6ea;border:1px solid #8e8f8f"></div><svg class="abs" style="left:1641px;top:988px" width="9" height="9" viewBox="0 0 9 9" fill="none" stroke="#3a5a9a" stroke-width="1.800"><path d="M1 4.500l2.500 3 4.500-7"/></svg><div class="row" style="left:1657px;top:985px;width:84.06px;text-align:justify;text-align-last:justify;white-space:nowrap">台柱底部全开挖</div><div class="sec" style="top:1037px"><svg class="abs" style="left:0;top:0" width="40" height="27" viewBox="0 0 40 27" fill="none" stroke="#111" stroke-width="2.1"><path d="M16.700 7.200L24.300 12L16.700 16.800"/></svg><span class="sc" style="width:84.06px;text-align:justify;text-align-last:justify;white-space:nowrap">锚栓布置设置</span><u></u></div></body></html>
